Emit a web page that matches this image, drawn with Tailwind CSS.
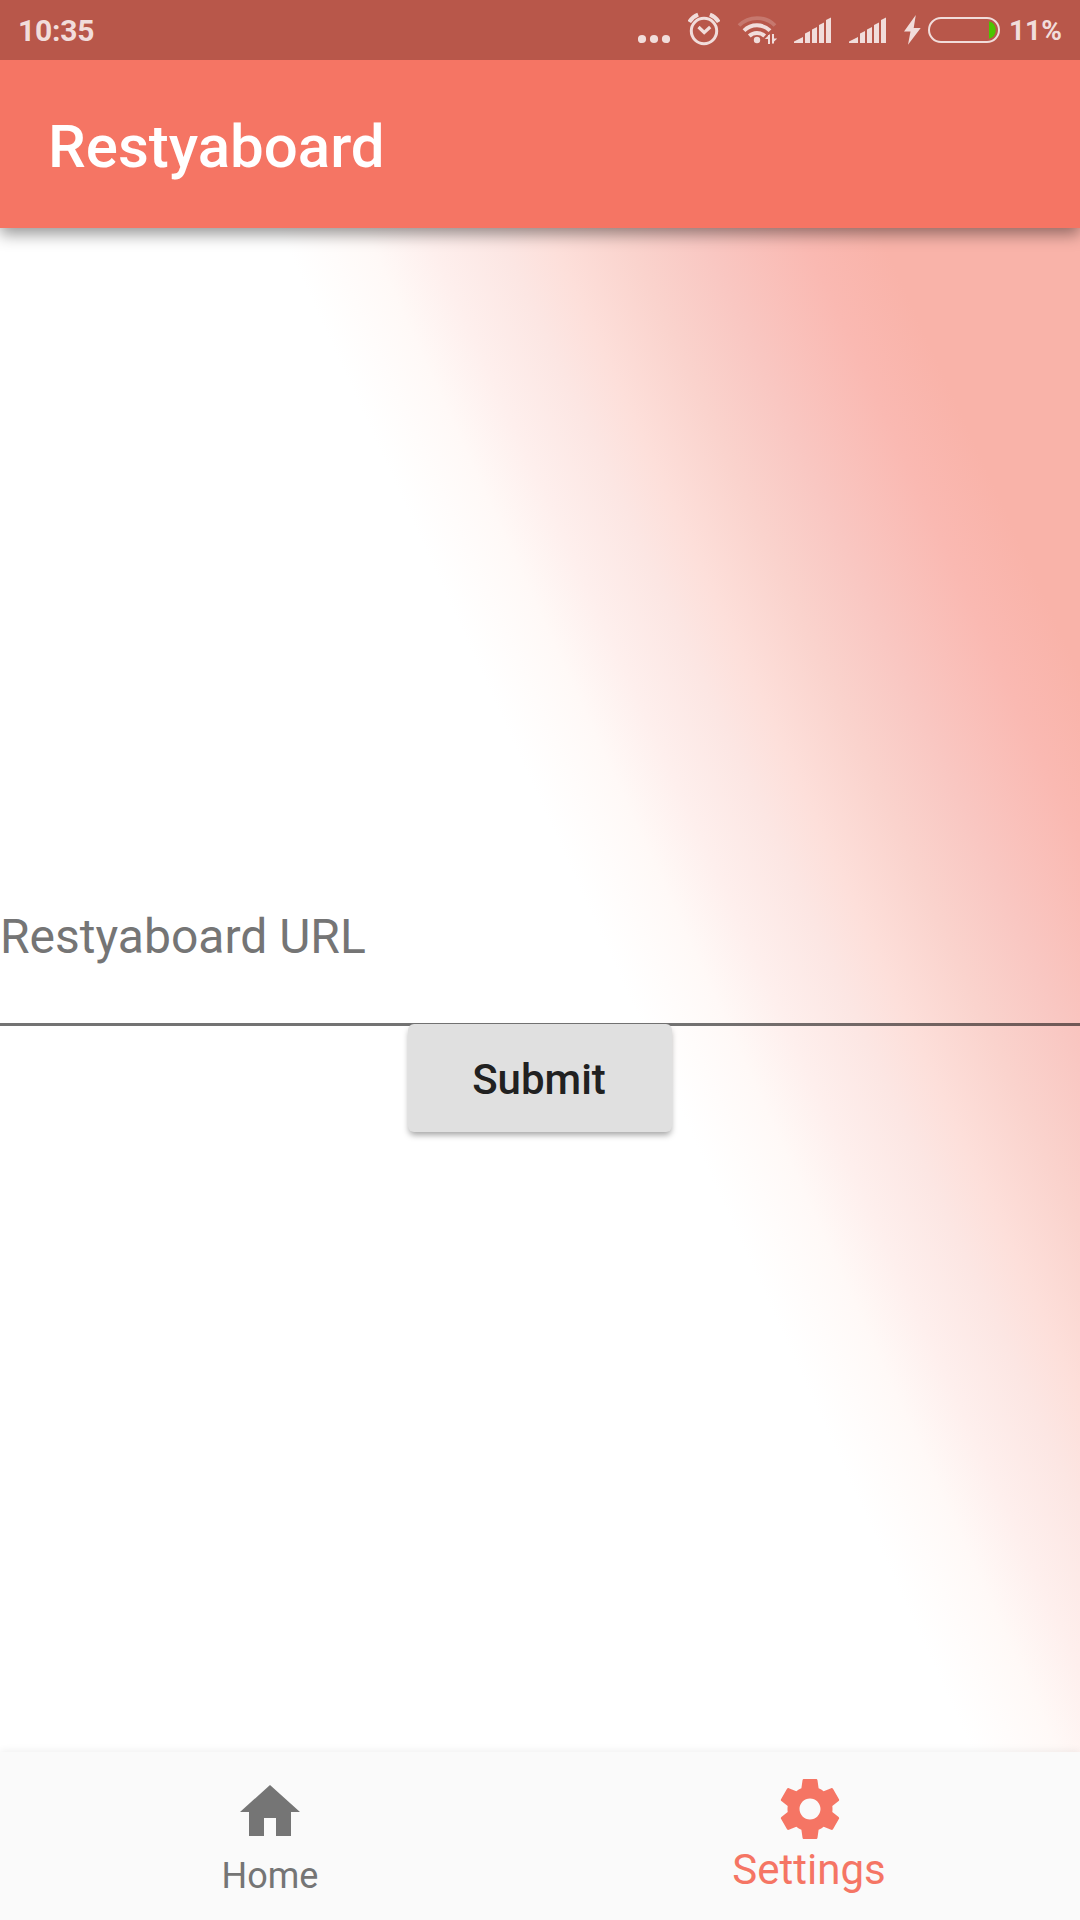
<!DOCTYPE html>
<html lang="en">
<head>
<meta charset="utf-8">
<title>Restyaboard</title>
<script src="https://cdn.jsdelivr.net/npm/@tailwindcss/browser@4"></script>
</head>
<body class="flex h-[1920px] w-[1080px] flex-col overflow-hidden bg-white font-['Roboto',sans-serif]">
  <!-- Status bar -->
  <div class="z-20 flex h-[60px] shrink-0 items-center bg-[#b8574a] text-[#f1dddb]">
    <span class="ml-[18px] pt-0.5 text-[30px] leading-[60px] font-bold tracking-[-0.2px]">10:35</span>
    <div class="ml-auto flex h-[60px] items-center pr-[18px]">
      <svg class="mr-[18px] h-[60px] w-8" viewBox="638 0 32 60" fill="currentColor"><circle cx="642" cy="39" r="4.1"/><circle cx="654" cy="39" r="4.1"/><circle cx="666" cy="39" r="4.1"/></svg>
      <svg class="mr-[17px] h-[60px] w-8" viewBox="688 0 32 60" fill="none" stroke="currentColor" stroke-width="3"><circle cx="704" cy="31" r="12.7"/><path d="M698.5 27l5.7 5.5 6-5.5" stroke-width="3.2"/><path d="M689.3 22q3-5 8.800-7.300M718.700 22q-3-5-8.800-7.300" stroke-width="4"/></svg>
      <svg class="mr-[17px] h-[60px] w-10" viewBox="737 0 40 60" fill="none" stroke="currentColor"><path d="M739 25.500a25.500 25.500 0 0 1 36 0" stroke-width="3.800" opacity=".25"/><path d="M744 30.700a18.500 18.500 0 0 1 26 0" stroke-width="4"/><path d="M749.300 36a11.300 11.300 0 0 1 15.400 0" stroke-width="4"/><circle cx="757" cy="40" r="3.200" fill="currentColor" stroke="none"/><path d="M769 44V35M773 34v9.500" stroke-width="2"/><path d="M764.800 39l5.200-5v5zM777.200 38.500l-5.200 5v-5z" fill="currentColor" stroke="none"/></svg>
      <svg class="mr-[18px] h-[60px] w-[37px]" viewBox="0 0 37 60" fill="currentColor"><path d="M0 43v-1.500L9 37v6zM11 43v-9.500l5-2.500v12zM18 43V29.500l5-2.500v16zM25 43V25l5-2.500V43zM32 43V20l5-2.500V43z"/></svg>
      <svg class="mr-[18px] h-[60px] w-[37px]" viewBox="0 0 37 60" fill="currentColor"><path d="M0 43v-1.500L9 37v6zM11 43v-9.500l5-2.500v12zM18 43V29.500l5-2.500v16zM25 43V25l5-2.500V43zM32 43V20l5-2.500V43z"/></svg>
      <svg class="mr-[7px] h-[60px] w-[17px]" viewBox="904 0 17 60" fill="currentColor"><path d="M915.800 15l-11.800 16.500h6.500L908 44.700 920.700 28h-7z"/></svg>
      <svg class="mr-[9px] h-[60px] w-[72px]" viewBox="928 0 72 60"><rect x="929" y="18" width="70" height="24" rx="12" fill="none" stroke="currentColor" stroke-width="2"/><path d="M989 21.300a9 9 0 0 1 0 17.400z" fill="#4cc400"/></svg>
      <span class="w-[53px] pt-px text-[28px] leading-[60px] font-bold whitespace-nowrap">11%</span>
    </div>
  </div>
  <!-- App bar -->
  <header class="z-10 flex h-[168px] shrink-0 items-center bg-[#f57564] px-12 shadow-[0_6px_15px_rgba(0,0,0,0.42)]">
    <h1 class="pt-[5px] text-[60px] leading-none font-medium text-white">Restyaboard</h1>
  </header>
  <!-- Server address form -->
  <main class="flex h-[1524px] flex-col items-center bg-[linear-gradient(65.500deg,#fff_885px,#fff9f7_963px,#feefed_1018px,#fce6e3_1084px,#fddfda_1130px,#fad3cd_1198px,#f9c7c2_1268px,#fab9b2_1360px,#f9b3a9_1430px)]">
    <label class="mt-[672px] flex h-[126px] w-full items-start border-b-3 border-black/55 text-[48px] leading-[74px] text-[#757575]">Restyaboard URL</label>
    <button class="-mt-0.5 h-[108px] w-[264px] rounded-[6px] bg-[#e0e0e0] pt-0.5 pr-0.5 text-[42px] font-medium text-[#212121] shadow-[0_4px_6px_-1px_rgba(0,0,0,0.36)]">Submit</button>
  </main>
  <!-- Bottom navigation -->
  <nav class="z-10 grid h-[168px] shrink-0 grid-cols-2 bg-[#fafafa] shadow-[0_-1px_8px_rgba(0,0,0,0.07)]">
    <a class="flex flex-col items-center pt-6 text-[#757575]">
      <svg class="size-[72px]" viewBox="0 0 24 24" fill="currentColor"><path d="M10 20v-6h4v6h5v-8h3L12 3 2 12h3v8z"/></svg>
      <span class="mt-[7px] text-[36px] leading-[42px]">Home</span>
    </a>
    <a class="flex flex-col items-center pt-[21px] text-[#f57564]">
      <svg class="size-[72px]" viewBox="0 0 24 24" fill="currentColor"><path d="M19.430 12.980c.04-.32.07-.64.07-.98s-.03-.66-.07-.98l2.110-1.650c.19-.15.24-.42.12-.64l-2-3.460c-.12-.22-.39-.3-.61-.22l-2.490 1c-.52-.4-1.080-.73-1.690-.98l-.38-2.650C14.460 2.180 14.250 2 14 2h-4c-.25 0-.46.18-.49.42l-.38 2.650c-.61.25-1.170.59-1.690.98l-2.490-1c-.23-.09-.49 0-.61.22l-2 3.460c-.13.22-.07.49.12.64l2.110 1.650c-.04.32-.07.65-.07.98s.03.66.07.98l-2.110 1.650c-.19.15-.24.42-.12.64l2 3.460c.12.22.39.3.61.22l2.490-1c.52.4 1.080.73 1.690.98l.38 2.650c.03.24.24.42.49.42h4c.25 0 .46-.18.49-.42l.38-2.650c.61-.25 1.170-.59 1.690-.98l2.490 1c.23.09.49 0 .61-.22l2-3.460c.12-.22.07-.49-.12-.64l-2.110-1.650zM12 15.500c-1.930 0-3.500-1.570-3.500-3.500s1.570-3.500 3.500-3.500 3.500 1.570 3.500 3.500-1.570 3.500-3.500 3.500z"/></svg>
      <span class="pr-0.5 text-[42px] leading-[49px]">Settings</span>
    </a>
  </nav>
</body>
</html>
